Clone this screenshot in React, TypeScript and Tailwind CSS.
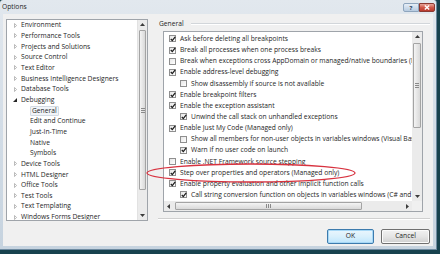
import React from "react";

type Option = { label: string; checked: boolean; indent?: boolean };

const treeItems: { label: string; level: number; kind?: "open" | "closed"; selected?: boolean }[] = [
  { label: "Environment", level: 0, kind: "closed" },
  { label: "Performance Tools", level: 0, kind: "closed" },
  { label: "Projects and Solutions", level: 0, kind: "closed" },
  { label: "Source Control", level: 0, kind: "closed" },
  { label: "Text Editor", level: 0, kind: "closed" },
  { label: "Business Intelligence Designers", level: 0, kind: "closed" },
  { label: "Database Tools", level: 0, kind: "closed" },
  { label: "Debugging", level: 0, kind: "open" },
  { label: "General", level: 1, selected: true },
  { label: "Edit and Continue", level: 1 },
  { label: "Just-In-Time", level: 1 },
  { label: "Native", level: 1 },
  { label: "Symbols", level: 1 },
  { label: "Device Tools", level: 0, kind: "closed" },
  { label: "HTML Designer", level: 0, kind: "closed" },
  { label: "Office Tools", level: 0, kind: "closed" },
  { label: "Test Tools", level: 0, kind: "closed" },
  { label: "Text Templating", level: 0, kind: "closed" },
  { label: "Windows Forms Designer", level: 0, kind: "closed" },
];

const options: Option[] = [
  { label: "Ask before deleting all breakpoints", checked: true },
  { label: "Break all processes when one process breaks", checked: true },
  { label: "Break when exceptions cross AppDomain or managed/native boundaries (Managed only)", checked: false },
  { label: "Enable address-level debugging", checked: true },
  { label: "Show disassembly if source is not available", checked: false, indent: true },
  { label: "Enable breakpoint filters", checked: true },
  { label: "Enable the exception assistant", checked: true },
  { label: "Unwind the call stack on unhandled exceptions", checked: true, indent: true },
  { label: "Enable Just My Code (Managed only)", checked: true },
  { label: "Show all members for non-user objects in variables windows (Visual Basic only)", checked: false, indent: true },
  { label: "Warn if no user code on launch", checked: true, indent: true },
  { label: "Enable .NET Framework source stepping", checked: false },
  { label: "Step over properties and operators (Managed only)", checked: true },
  { label: "Enable property evaluation and other implicit function calls", checked: true },
  { label: "Call string conversion function on objects in variables windows (C# and JavaScript only)", checked: true, indent: true },
];

function Arrow({ dir }: { dir: "up" | "down" | "left" | "right" }) {
  const pts = {
    up: "0,3 2.5,0 5,3",
    down: "0,0 2.5,3 5,0",
    left: "3,0 0,2.5 3,5",
    right: "0,0 3,2.5 0,5",
  }[dir];
  const vertical = dir === "up" || dir === "down";
  return (
    <svg width={vertical ? 5 : 3} height={vertical ? 3 : 5} viewBox={vertical ? "0 0 5 3" : "0 0 3 5"}>
      <polygon points={pts} fill="#3c3c3c" />
    </svg>
  );
}

function Grip({ vertical }: { vertical: boolean }) {
  return vertical ? (
    <div className="flex flex-col gap-[1px]">
      <div className="h-[1px] w-[4px] bg-[#8a8a8a]" />
      <div className="h-[1px] w-[4px] bg-[#8a8a8a]" />
      <div className="h-[1px] w-[4px] bg-[#8a8a8a]" />
    </div>
  ) : (
    <div className="flex gap-[1px]">
      <div className="h-[4px] w-[1px] bg-[#8a8a8a]" />
      <div className="h-[4px] w-[1px] bg-[#8a8a8a]" />
      <div className="h-[4px] w-[1px] bg-[#8a8a8a]" />
    </div>
  );
}

function Check({ checked }: { checked: boolean }) {
  return (
    <div className="flex h-[7px] w-[7px] shrink-0 items-center justify-center border border-[#8f8f8f] bg-gradient-to-br from-[#e6e6e6] to-white">
      {checked && (
        <svg width="6" height="6" viewBox="0 0 6 6" className="overflow-visible">
          <path d="M0.8 3 L2.3 4.6 L5.2 0.9" stroke="#1c1c1c" strokeWidth="1.3" fill="none" />
        </svg>
      )}
    </div>
  );
}

export default function App() {
  return (
    <div className="relative h-[254px] w-[440px] overflow-hidden bg-[#17424e] font-['Open_Sans',sans-serif] text-[6.7px] text-[#1e1e1e]">
      <div className="flex h-[250px] w-[437px] flex-col rounded-t-[3px] border-r border-b border-[#6d8aa0] bg-gradient-to-b from-[#e2e8ee] via-[#d3dde7] to-[#c6d3df]">
        {/* title bar */}
        <div className="flex h-[14px] items-start">
          <span className="ml-[2px] mt-[2px] leading-[10px] text-[#262626]">Options</span>
          <div className="ml-auto mr-[1px] mt-[3px] flex">
            <div className="flex h-[9px] w-[16px] items-center justify-center rounded-l-[2px] border border-[#8ea5bd] bg-gradient-to-b from-[#e6eef7] to-[#b7cbe0] text-[6px] font-bold leading-none text-[#24405e]">
              ?
            </div>
            <div className="flex h-[9px] w-[16px] items-center justify-center rounded-r-[2px] border border-[#8a3a33] bg-gradient-to-b from-[#e6a59a] via-[#d0584a] to-[#b9392c]">
              <svg width="6" height="5" viewBox="0 0 6 5">
                <path d="M0.8 0.5 L5.2 4.5 M5.2 0.5 L0.8 4.5" stroke="white" strokeWidth="1.4" />
              </svg>
            </div>
          </div>
        </div>

        {/* client area */}
        <div className="mx-[3px] mb-[3px] flex flex-1 bg-[#f0f0f0]">
          {/* tree */}
          <div className="ml-[3px] mt-[5px] flex h-[202px] w-[142px] border border-[#9fa4aa] bg-white">
            <div className="flex-1 overflow-hidden">
              {treeItems.map((item) => (
                <div
                  key={item.label}
                  className={`flex h-[10.67px] items-center whitespace-nowrap ${item.level ? "pl-[23px]" : "pl-[6px]"}`}
                >
                  {item.level === 0 && (
                    <div className="mr-[4px] flex w-[4px] justify-center">
                      {item.kind === "open" ? (
                        <svg width="4" height="4" viewBox="0 0 4 4">
                          <polygon points="4,0 4,4 0,4" fill="#262626" />
                        </svg>
                      ) : (
                        <svg width="3" height="5" viewBox="0 0 3 5">
                          <polygon points="0.5,0.5 2.6,2.5 0.5,4.5" fill="none" stroke="#a9a9a9" strokeWidth="0.8" />
                        </svg>
                      )}
                    </div>
                  )}
                  <span
                    className={
                      item.selected
                        ? "rounded-[1px] border border-[#d3dbe4] bg-[#f1f4f8] px-[1px] leading-[8px]"
                        : "leading-[8px]"
                    }
                  >
                    {item.label}
                  </span>
                </div>
              ))}
            </div>
            {/* tree scrollbar */}
            <div className="flex w-[10px] flex-col border-l border-[#e2e2e2] bg-[#ebebeb]">
              <div className="flex h-[9px] items-center justify-center">
                <Arrow dir="up" />
              </div>
              <div className="flex-1">
                <div className="mx-[1px] mt-[1px] flex h-[160px] items-center justify-center rounded-[1px] border border-[#a4a4a4] bg-gradient-to-r from-[#f4f4f4] to-[#d9d9d9]">
                  <Grip vertical />
                </div>
              </div>
              <div className="flex h-[9px] items-center justify-center">
                <Arrow dir="down" />
              </div>
            </div>
          </div>

          {/* right column */}
          <div className="ml-[10px] mt-[5px] flex w-[272px] flex-col">
            <div className="flex h-[10px] items-center">
              <span className="ml-[1px] leading-[8px]">General</span>
              <div className="ml-[7px] flex-1 border-t border-b border-t-[#d2d6da] border-b-white" />
            </div>

            {/* options list */}
            <div className="ml-[5px] mt-[2px] flex h-[181px] w-[260px] flex-col border border-[#9fa4aa] bg-white">
              <div className="flex flex-1">
                <div className="flex-1 overflow-hidden pt-[1.4px]">
                  {options.map((o) => (
                    <div
                      key={o.label}
                      className={`flex h-[11.15px] items-center gap-[4px] whitespace-nowrap ${o.indent ? "pl-[16px]" : "pl-[5px]"}`}
                    >
                      <Check checked={o.checked} />
                      <span className="leading-[8px]">{o.label}</span>
                    </div>
                  ))}
                </div>
                <div className="flex w-[10px] flex-col bg-[#ebebeb]">
                  <div className="flex h-[9px] items-center justify-center">
                    <Arrow dir="up" />
                  </div>
                  <div className="flex-1">
                    <div className="mx-[1px] mt-[2px] flex h-[85px] items-center justify-center rounded-[1px] border border-[#a4a4a4] bg-gradient-to-r from-[#f4f4f4] to-[#d9d9d9]">
                      <Grip vertical />
                    </div>
                  </div>
                  <div className="flex h-[9px] items-center justify-center">
                    <Arrow dir="down" />
                  </div>
                </div>
              </div>
              <div className="flex h-[10px]">
                <div className="flex flex-1 bg-[#ebebeb]">
                  <div className="flex w-[9px] items-center justify-center">
                    <Arrow dir="left" />
                  </div>
                  <div className="flex-1">
                    <div className="my-[1px] ml-[2px] flex h-[8px] w-[187px] items-center justify-center rounded-[1px] border border-[#a4a4a4] bg-gradient-to-b from-[#f4f4f4] to-[#d9d9d9]">
                      <Grip vertical={false} />
                    </div>
                  </div>
                  <div className="flex w-[9px] items-center justify-center">
                    <Arrow dir="right" />
                  </div>
                </div>
                <div className="w-[10px] bg-[#f0f0f0]" />
              </div>
            </div>

            <div className="mt-[6px] border-t border-b border-t-[#d0d0d0] border-b-white" />

            <div className="mt-[9px] flex justify-end gap-[7px]">
              <button
                type="button"
                className="flex h-[15px] w-[47px] items-center justify-center rounded-[2px] border border-[#3d7bad] bg-gradient-to-b from-[#eaf6fd] via-[#d9f0fc] to-[#bee6fd] leading-none text-[#1e1e1e] shadow-[inset_0_0_0_1px_#a7d8f6]"
              >
                OK
              </button>
              <button
                type="button"
                className="flex h-[15px] w-[49px] items-center justify-center rounded-[2px] border border-[#707070] bg-gradient-to-b from-[#f2f2f2] via-[#e5e5e5] to-[#cfcfcf] leading-none text-[#1e1e1e] shadow-[inset_0_0_0_1px_#fbfbfb]"
              >
                Cancel
              </button>
            </div>
          </div>
        </div>
      </div>

      {/* red annotation ellipse */}
      <svg className="absolute left-[140px] top-[158px]" width="225" height="30" viewBox="0 0 225 30">
        <ellipse cx="111" cy="15" rx="104" ry="9" fill="none" stroke="#d8323f" strokeWidth="1.3" />
      </svg>
    </div>
  );
}
